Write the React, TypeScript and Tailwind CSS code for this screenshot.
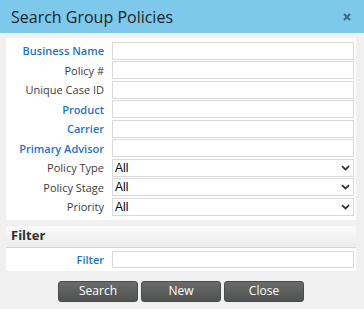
import React from "react";

type Field = { label: string; link?: boolean; select?: boolean };

const fields: Field[] = [
  { label: "Business Name", link: true },
  { label: "Policy #" },
  { label: "Unique Case ID" },
  { label: "Product", link: true },
  { label: "Carrier", link: true },
  { label: "Primary Advisor", link: true },
  { label: "Policy Type", select: true },
  { label: "Policy Stage", select: true },
  { label: "Priority", select: true },
];

function Chevron() {
  return (
    <svg
      width="9"
      height="6"
      viewBox="0 0 9 6"
      className="pointer-events-none absolute right-[4px] top-1/2 -translate-y-1/2"
    >
      <path d="M1 1.2 L4.5 4.5 L8 1.2" stroke="#333" strokeWidth="1.8" fill="none" />
    </svg>
  );
}

function Row({ label, link, select }: Field) {
  return (
    <div className="flex h-[19.5px] items-center">
      <div
        className={`w-[98px] shrink-0 text-right text-[11px] leading-none ${
          link ? "font-semibold text-[#1b74cc]" : "text-[#3c3c3c]"
        }`}
      >
        {label}
      </div>
      <div className="relative ml-[8px] mr-[2px] flex-1">
        {select ? (
          <>
            <select className="block h-[18px] w-full appearance-none border border-[#dadada] bg-white pl-[2px] text-[12px] leading-none text-black [font-family:'Liberation_Sans',Arial,sans-serif]">
              <option>All</option>
            </select>
            <Chevron />
          </>
        ) : (
          <input className="block h-[18px] w-full border border-[#dadada] bg-white" />
        )}
      </div>
    </div>
  );
}

export default function App() {
  return (
    <div className="h-[309px] w-[364px] overflow-hidden bg-[#f0f0f0] [font-family:'Open_Sans',sans-serif]">
      {/* Header */}
      <div className="flex h-[33px] items-center justify-between bg-[#7dc8eb] pl-[11px] pr-[13px]">
        <span className="text-[16px] text-[#1f1f1f]">Search Group Policies</span>
        <svg width="8" height="8" viewBox="0 0 8 8">
          <path d="M1 1 L7 7 M7 1 L1 7" stroke="#3b6b80" strokeWidth="2" />
        </svg>
      </div>

      <div className="px-[6px] pt-[5px]">
        {/* Main fields */}
        <div className="mr-[2px] bg-white py-[3px]">
          {fields.map((f) => (
            <Row key={f.label} {...f} />
          ))}
        </div>

        {/* Filter section */}
        <div className="mr-[2px] mt-[6px]">
          <div className="flex h-[22px] items-center border-b border-[#d4d4d4] bg-gradient-to-b from-[#fafafa] to-[#ececec] pl-[5px] text-[13px] font-bold text-[#2e2e2e]">
            Filter
          </div>
          <div className="flex h-[23px] items-center bg-white">
            <div className="w-[98px] shrink-0 text-right text-[11px] font-semibold leading-none text-[#1b74cc]">
              Filter
            </div>
            <div className="ml-[8px] mr-[2px] flex-1">
              <input className="block h-[17px] w-full border border-[#dadada] bg-white" />
            </div>
          </div>
        </div>

        {/* Buttons */}
        <div className="mt-[10px] flex justify-center gap-[3px] pr-[2px]">
          {["Search", "New", "Close"].map((b) => (
            <button
              key={b}
              className="h-[21px] w-[80px] rounded-[3px] border border-[#4a4c4b] bg-gradient-to-b from-[#6a6c6b] to-[#505251] text-[12px] leading-none text-white"
            >
              {b}
            </button>
          ))}
        </div>
      </div>
    </div>
  );
}
